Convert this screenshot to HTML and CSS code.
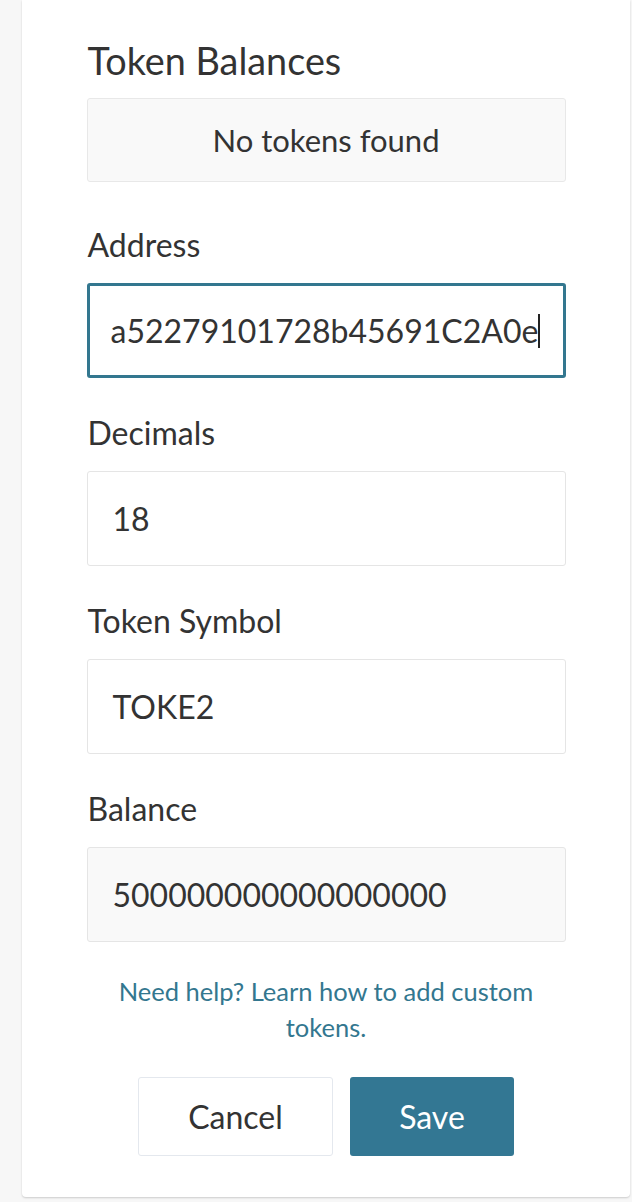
FILE: index.html
```html
<!DOCTYPE html>
<html>
<head>
<meta charset="utf-8">
<link rel="stylesheet" href="styles.css">
</head>
<body>
<div class="card">
  <div class="inner">
    <h2 class="title">Token Balances</h2>
    <div class="empty">No tokens found</div>

    <label class="label first">Address</label>
    <div class="input focused"><span>a52279101728b45691C2A0e</span><span class="caret"></span></div>

    <label class="label">Decimals</label>
    <div class="input">18</div>

    <label class="label">Token Symbol</label>
    <div class="input">TOKE2</div>

    <label class="label">Balance</label>
    <div class="input readonly">500000000000000000</div>

    <p class="help">Need help? Learn how to add custom tokens.</p>

    <div class="actions">
      <button class="btn cancel">Cancel</button>
      <button class="btn save">Save</button>
    </div>
  </div>
</div>
</body>
</html>
```

FILE: styles.css
```css
html, body {
  margin: 0;
  padding: 0;
}
body {
  background: #f7f7f7;
  font-family: Lato, "Open Sans", sans-serif;
  color: #333;
  height: 1202px;
  overflow: hidden;
}
.card {
  margin-left: 22px;
  width: 608px;
  background: #fff;
  border-radius: 0 0 4px 4px;
  box-shadow: 0 1px 2px rgba(0,0,0,0.18);
  padding: 38px 0 41px;
}
.inner {
  width: 479px;
  margin: 0 auto;
  display: flex;
  flex-direction: column;
}
.title {
  margin: 0 0 0 1px;
  font-weight: 400;
  font-size: 37.8px;
  line-height: 46px;
  height: 60px;
}
.empty {
  height: 82px;
  background: #f9f9f9;
  border: 1px solid #e8e8e8;
  border-radius: 3px;
  display: flex;
  align-items: center;
  justify-content: center;
  font-size: 31px;
}
.label {
  display: block;
  font-size: 32px;
  line-height: 36px;
  margin: 37px 0 20px 1px;
}
.label.first {
  margin-top: 45px;
}
.input {
  height: 95px;
  box-sizing: border-box;
  border: 1px solid #e5e5e5;
  border-radius: 3px;
  background: #fff;
  display: flex;
  align-items: center;
  padding-left: 25px;
  font-size: 32px;
}
.input.focused {
  border: 3px solid #33778f;
  padding-left: 21px;
}
.input.readonly {
  background: #f9f9f9;
}
.caret {
  display: inline-block;
  width: 2px;
  height: 34px;
  background: #222;
}
.help {
  margin: 31px 0 0;
  text-align: center;
  color: #33778f;
  font-size: 25.5px;
  line-height: 36px;
}
.actions {
  display: flex;
  justify-content: center;
  gap: 17px;
  margin-top: 32px;
}
.btn {
  font-family: Lato, "Open Sans", sans-serif;
  font-size: 32px;
  height: 79px;
  border-radius: 3px;
  cursor: pointer;
}
.cancel {
  width: 195px;
  background: #fff;
  border: 1px solid #e4e8ee;
  color: #333;
}
.save {
  width: 164px;
  background: #337793;
  border: none;
  color: #fff;
}
```
